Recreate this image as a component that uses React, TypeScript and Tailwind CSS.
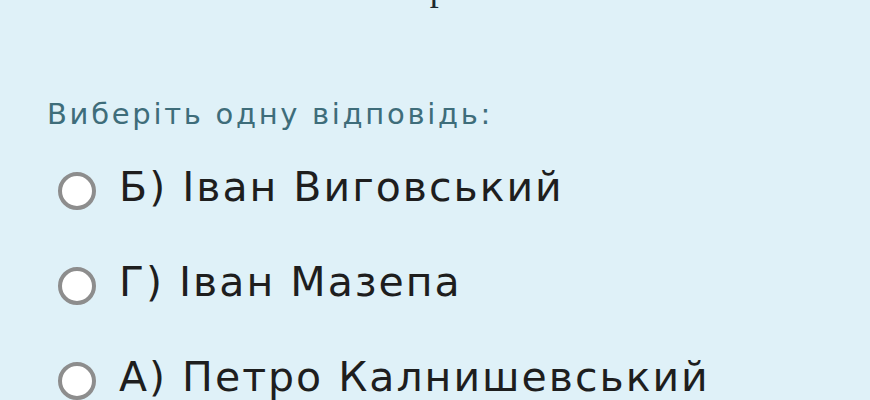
export default function App() {
  const options = ["Б) Іван Виговський", "Г) Іван Мазепа", "А) Петро Калнишевський"];
  return (
    <div className="w-[870px] h-[400px] overflow-hidden bg-[#dff1f8]">
      <div
        className="-mt-[34px] pl-[55px] text-[36px] leading-[44px] text-[#1f2a30] whitespace-nowrap"
        style={{ fontFamily: '"Liberation Serif", serif' }}
      >
        кошовим отаманом Запорозької Січі
      </div>
      <div
        className="mt-[86px] pl-[47px] text-[29px] leading-[36px] tracking-[2.7px] text-[#3e6d7a] whitespace-nowrap"
        style={{ fontFamily: '"DejaVu Sans", sans-serif' }}
      >
        Виберіть одну відповідь:
      </div>
      <div className="mt-[8px] flex flex-col pl-[58px]">
        {options.map((o) => (
          <div key={o} className="h-[95px] flex items-center gap-[23px]">
            <span className="mt-[6px] w-[38px] h-[38px] rounded-full bg-white border-[4px] border-[#8d8d8d] shrink-0" />
            <span
              className="text-[41px] leading-none tracking-[2px] text-[#1e1e1e] whitespace-nowrap"
              style={{ fontFamily: '"DejaVu Sans", sans-serif' }}
            >
              {o}
            </span>
          </div>
        ))}
      </div>
    </div>
  );
}
